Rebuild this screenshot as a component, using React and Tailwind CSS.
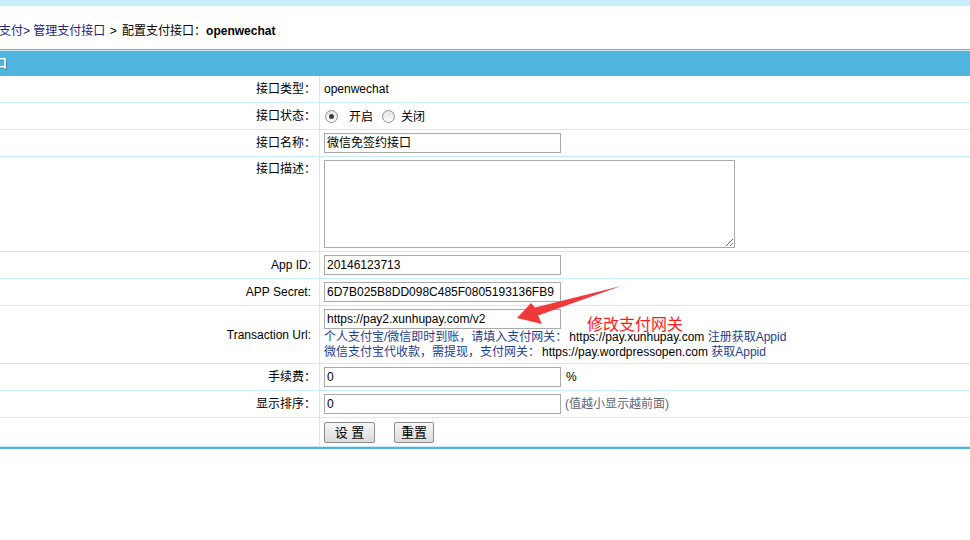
import React from "react";

const font = {
  fontFamily: '"Liberation Sans", "Noto Sans CJK SC", sans-serif',
};

const Row = ({ label, children, className = "", labelClass = "items-center" }) => {
  // full-width colons sit to the left of their cell, so pull those labels closer
  const pad = label.endsWith("：") ? "pr-[3px]" : "pr-[8px]";
  return (
    <div className={`flex border-b border-[#c9ecfb] ${className}`}>
      <div
        className={`w-[320px] shrink-0 flex justify-end border-r border-[#c9ecfb] ${pad} ${labelClass}`}
      >
        {label}
      </div>
      <div className="flex-1 pl-[4px] py-[3px] flex flex-col justify-center">{children}</div>
    </div>
  );
};

const TextInput = ({ value, w = "w-[237px]" }) => (
  <input
    readOnly
    value={value}
    className={`${w} h-[20px] border border-[#a9a9a9] px-[2px] text-[12px] text-black outline-none`}
    style={font}
  />
);

const Radio = ({ checked }) => (
  <span className="w-[13px] h-[13px] rounded-full border border-[#8f8f8f] bg-gradient-to-b from-[#e4e4e4] to-[#fdfdfd] flex items-center justify-center">
    {checked && <span className="w-[5px] h-[5px] rounded-full bg-[#3c3c3c]" />}
  </span>
);

const Button = ({ children, w }) => (
  <button
    className={`${w} h-[21px] border border-[#8d8d8d] rounded-[2px] bg-gradient-to-b from-[#f6f6f6] to-[#dcdcdc] text-[13px] text-black leading-none`}
    style={font}
  >
    {children}
  </button>
);

export default function App() {
  return (
    <div
      className="relative w-[970px] h-[540px] overflow-hidden bg-white text-[12px] text-black"
      style={font}
    >
      <div className="h-[6px] bg-[#c9eefd]" />

      <div className="h-[43px] pt-[15px] leading-[20px] whitespace-nowrap">
        <span className="-ml-[1px] text-[#23237f]">支付</span>
        <span className="text-[#23237f]">&gt; </span>
        <span className="text-[#23237f]">管理支付接口</span>
        <span className="ml-[1px]"> &gt; </span>
        <span className="ml-[2px]">配置支付接口：</span>
        <span className="font-bold">openwechat</span>
      </div>

      <div className="border-t border-[#5ab2da]">
        <div className="border-t border-[#d3eef9] h-[26px] bg-[#4fb4de] flex items-center whitespace-nowrap">
          <span className="-ml-[65px] text-white font-bold text-[12px] [text-shadow:1px_1px_0_rgba(0,0,0,0.35)]">
            配置支付接口
          </span>
        </div>
      </div>

      <div className="leading-[20px]">
        <Row label="接口类型：">
          <span>openwechat</span>
        </Row>
        <Row label="接口状态：">
          <div className="flex items-center h-[20px] pt-[1px]">
            <span className="ml-[1px]">
              <Radio checked />
            </span>
            <span className="ml-[11px]">开启</span>
            <span className="ml-[9px]">
              <Radio />
            </span>
            <span className="ml-[6px]">关闭</span>
          </div>
        </Row>
        <Row label="接口名称：">
          <TextInput value="微信免签约接口" />
        </Row>
        <Row label="接口描述：" labelClass="items-start pt-[2px]">
          <textarea
            readOnly
            className="w-[411px] h-[88px] border border-[#a9a9a9] outline-none text-[12px] block"
            style={font}
          />
        </Row>
        <Row label="App ID:">
          <TextInput value="20146123713" />
        </Row>
        <Row label="APP Secret:">
          <TextInput value="6D7B025B8DD098C485F0805193136FB9" />
        </Row>
        <Row label="Transaction Url:">
          <TextInput value="https://pay2.xunhupay.com/v2" />
          <div className="leading-[15px] pt-[1px] whitespace-nowrap">
            <div>
              <span className="text-[#1e3d8f]">个人支付宝/微信即时到账，请填入支付网关：</span>
              <span className="ml-[2px]">https://pay.xunhupay.com </span>
              <span className="text-[#1e3d8f]">注册获取Appid</span>
            </div>
            <div>
              <span className="text-[#1e3d8f]">微信支付宝代收款，需提现，支付网关：</span>
              <span className="ml-[2px]">https://pay.wordpressopen.com </span>
              <span className="text-[#1e3d8f]">获取Appid</span>
            </div>
          </div>
        </Row>
        <Row label="手续费：">
          <div className="flex items-center gap-[5px]">
            <TextInput value="0" />
            <span>%</span>
          </div>
        </Row>
        <Row label="显示排序：">
          <div className="flex items-center gap-[4px]">
            <TextInput value="0" />
            <span className="text-[#5f6679]">(值越小显示越前面)</span>
          </div>
        </Row>
        <Row label="">
          <div className="flex items-center gap-[19px] h-[22px]">
            <Button w="w-[51px]">设 置</Button>
            <Button w="w-[40px]">重置</Button>
          </div>
        </Row>
        <div className="h-[2px] bg-[#52b2da]" />
      </div>

      <svg
        className="absolute left-0 top-0 pointer-events-none"
        width="970"
        height="540"
        viewBox="0 0 970 540"
      >
        <polygon
          points="517,318 531,303 535,307.5 621,286 538,315.5 542,324"
          fill="#f03a3a"
        />
      </svg>
      <span className="absolute left-[587px] top-[314px] text-[16px] leading-[22px] text-[#ff1a1a] whitespace-nowrap">
        修改支付网关
      </span>
    </div>
  );
}
